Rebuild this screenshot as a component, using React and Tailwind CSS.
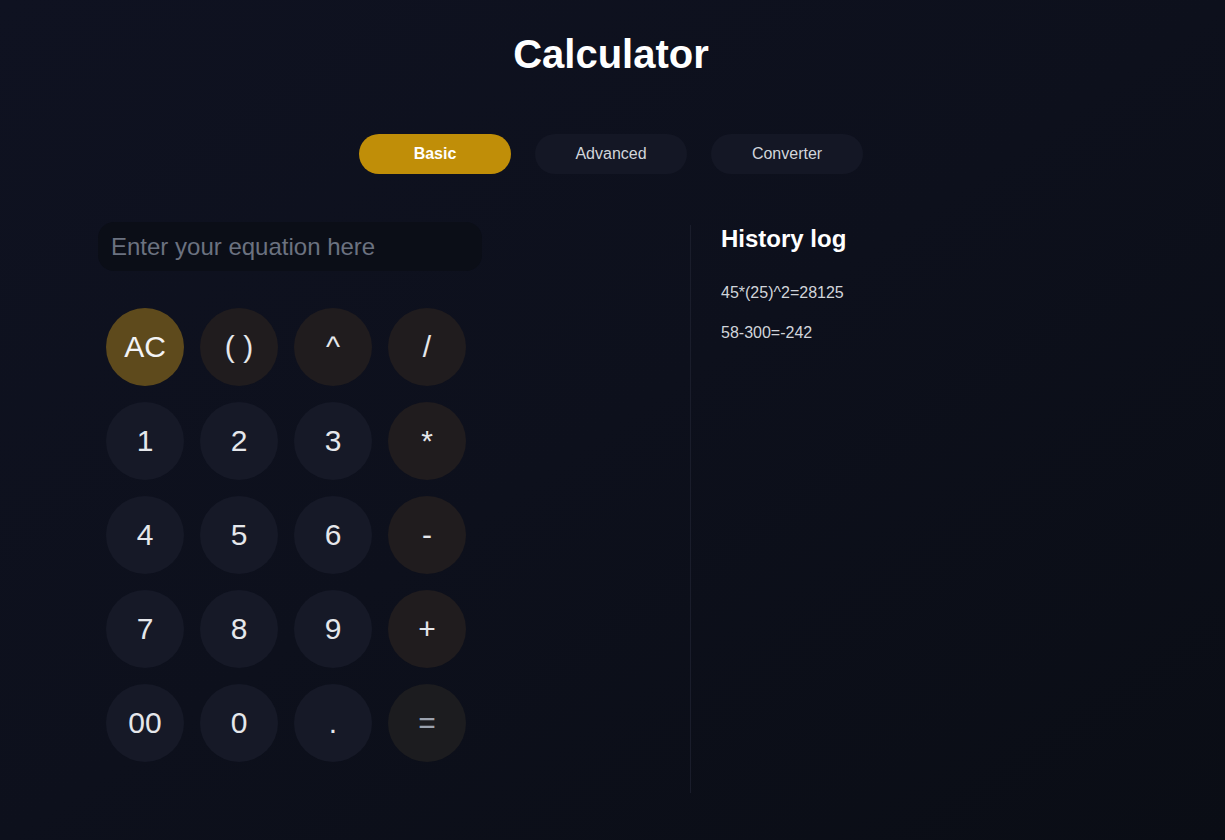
import React from "react";

const keys = [
  ["AC", "ac"], ["( )", "op"], ["^", "op"], ["/", "op"],
  ["1", "num"], ["2", "num"], ["3", "num"], ["*", "op"],
  ["4", "num"], ["5", "num"], ["6", "num"], ["-", "op"],
  ["7", "num"], ["8", "num"], ["9", "num"], ["+", "op"],
  ["00", "num"], ["0", "num"], [".", "num"], ["=", "eq"],
];

const styles = {
  ac: "bg-[#5e4a1c] text-[#f3f4f6]",
  op: "bg-[#201c1e] text-[#e5e7eb]",
  num: "bg-[#161927] text-[#e5e7eb]",
  eq: "bg-[#1c1c1f] text-[#9ca3af]",
};

export default function App() {
  return (
    <div className="min-h-screen w-full bg-gradient-to-br from-[#0f1221] via-[#0d101c] to-[#0a0d15] font-['Liberation_Sans',Arial,sans-serif]">
      <h1 className="pr-[3px] pt-[31px] text-center text-[40px] font-bold leading-[46px] text-white">Calculator</h1>
      <div className="mt-[57px] flex justify-center gap-6 pr-[3px]">
        <button className="h-10 w-[152px] rounded-full bg-[#c08e08] text-base font-bold text-white">Basic</button>
        <button className="h-10 w-[152px] rounded-full bg-[#141725] text-base text-[#d1d5db]">Advanced</button>
        <button className="h-10 w-[152px] rounded-full bg-[#141725] text-base text-[#d1d5db]">Converter</button>
      </div>
      <div className="mt-[48px] flex pl-[98px]">
        <div className="w-[592px]">
          <div className="flex h-[49px] w-[384px] items-center rounded-2xl bg-[#0b0e17] pl-[13px] text-2xl text-[#6b7280]">
            Enter your equation here
          </div>
          <div className="ml-2 mt-[37px] grid grid-cols-[repeat(4,78px)] gap-4">
            {keys.map(([label, kind], i) => (
              <button
                key={i}
                className={`flex h-[78px] w-[78px] items-center justify-center rounded-full text-3xl ${styles[kind]}`}
              >
                {label}
              </button>
            ))}
          </div>
        </div>
        <div className="mt-[3px] h-[568px] border-l border-[#1a1d2b] pl-[30px]">
          <h2 className="text-[24px] font-bold leading-[28px] text-white">History log</h2>
          <div className="mt-[31px] flex flex-col gap-[22px] text-base leading-[18px] text-[#d1d5db]">
            <p>45*(25)^2=28125</p>
            <p>58-300=-242</p>
          </div>
        </div>
      </div>
    </div>
  );
}
